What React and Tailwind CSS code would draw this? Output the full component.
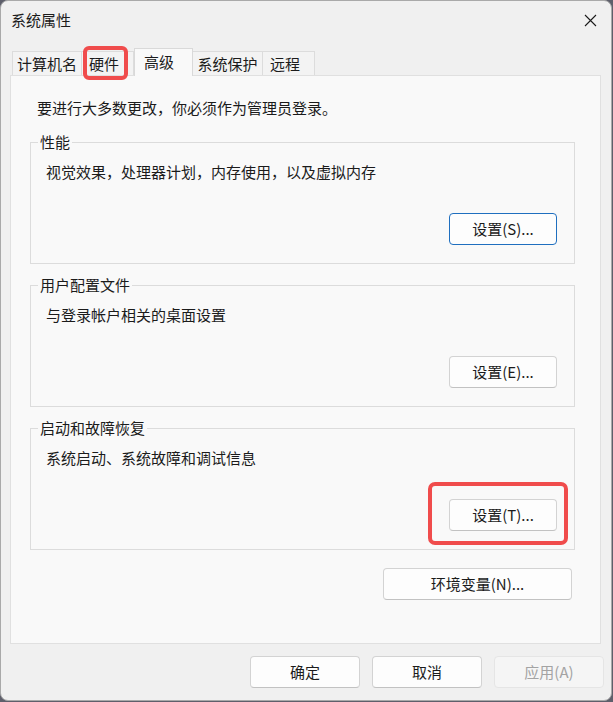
import React from "react";

// Tabs across the top of the property sheet
const TABS = [
  { label: "计算机名", w: "w-[70px]", pad: "justify-center" },
  { label: "硬件", w: "w-[52px]", pad: "pl-[7px]" },
  { label: "高级", w: "w-[59px]", pad: "pl-[9px]", active: true },
  { label: "系统保护", w: "w-[70px]", pad: "justify-center" },
  { label: "远程", w: "w-[52px]", pad: "pl-[7px]" },
];

const GROUPS = [
  { title: "性能", desc: "视觉效果，处理器计划，内存使用，以及虚拟内存", btn: "设置(S)...", focused: true },
  { title: "用户配置文件", desc: "与登录帐户相关的桌面设置", btn: "设置(E)..." },
  { title: "启动和故障恢复", desc: "系统启动、系统故障和调试信息", btn: "设置(T)..." },
];

function Button({ children, className = "", focused, disabled }) {
  return (
    <div
      className={
        "flex h-[32px] items-center justify-center rounded-[4px] border text-[15px] leading-[20px] " +
        (disabled
          ? "border-[#e5e5e5] bg-[#f5f5f5] text-[#a3a3a3] "
          : focused
            ? "border-[#1f6fbf] bg-[#fdfdfd] text-[#1b1b1b] "
            : "border-[#d3d3d3] border-b-[#c2c2c2] bg-[#fdfdfd] text-[#1b1b1b] ") +
        className
      }
    >
      {children}
    </div>
  );
}

function Group({ title, desc, btn, focused }) {
  return (
    <div className="relative h-[122px] w-[545px] border border-[#dcdcdc]">
      {/* legend sitting on the top border */}
      <span className="absolute left-[7px] top-[-11px] bg-[#f9f9f9] px-[2px] text-[15px] leading-[20px] text-[#1b1b1b]">
        {title}
      </span>
      <p className="pl-[15px] pt-[19px] text-[15px] leading-[20px] text-[#1b1b1b]">{desc}</p>
      <div className="mt-[31px] flex justify-end pr-[17px]">
        <Button className="w-[108px]" focused={focused}>
          {btn}
        </Button>
      </div>
    </div>
  );
}

export default function App() {
  return (
    <div className="relative h-[702px] w-[613px] bg-[#5e5f6b] font-['Microsoft_YaHei_UI','Noto_Sans_CJK_SC',sans-serif]">
      <div className="flex h-[701px] w-[612px] flex-col overflow-hidden rounded-[8px] border border-[#a9a9a9] bg-[#f0f0f0]">
        {/* Title bar */}
        <div className="flex h-[37px] shrink-0 items-center justify-between pl-[10px] pr-[14px]">
          <span className="text-[15px] leading-[20px] text-[#1b1b1b]">系统属性</span>
          <svg width="13" height="13" viewBox="0 0 13 13" className="mt-[1px]">
            <path d="M1 1 L12 12 M12 1 L1 12" stroke="#1b1b1b" strokeWidth="1.1" />
          </svg>
        </div>

        {/* Tab strip */}
        <div className="mt-[10px] flex h-[27px] shrink-0 items-end pl-[11px]">
          {TABS.map((t) =>
            t.active ? (
              <div
                key={t.label}
                className={`relative z-10 mb-[-1px] flex h-[28px] items-start border border-b-0 border-[#d9d9d9] bg-[#f9f9f9] pt-[3px] text-[15px] leading-[20px] text-[#1b1b1b] ${t.w} ${t.pad}`}
              >
                {t.label}
              </div>
            ) : (
              <div
                key={t.label}
                className={`flex h-[24px] items-center border border-b-0 border-l-0 border-[#dcdcdc] bg-[#f3f3f3] text-[15px] leading-[20px] text-[#1b1b1b] first:border-l ${t.w} ${t.pad}`}
              >
                {t.label}
              </div>
            )
          )}
        </div>

        {/* Tab page */}
        <div className="ml-[9px] flex h-[569px] w-[591px] shrink-0 flex-col border border-[#e0e0e0] bg-[#f9f9f9]">
          <p className="mt-[22px] pl-[26px] text-[15px] leading-[20px] text-[#1b1b1b]">
            要进行大多数更改，你必须作为管理员登录。
          </p>
          <div className="mt-[24px] flex flex-col gap-[21px] pl-[19px]">
            {GROUPS.map((g) => (
              <Group key={g.title} {...g} />
            ))}
          </div>
          <div className="mt-[18px] flex justify-end pr-[28px]">
            <Button className="w-[189px]">环境变量(N)...</Button>
          </div>
        </div>

        {/* Dialog buttons */}
        <div className="mt-[12px] flex justify-end gap-[12px] pr-[7px]">
          <Button className="w-[110px]">确定</Button>
          <Button className="w-[110px]">取消</Button>
          <Button className="w-[110px]" disabled>
            应用(A)
          </Button>
        </div>
      </div>

      {/* Red annotation boxes */}
      <div className="pointer-events-none absolute left-[83px] top-[46px] h-[34px] w-[45px] rounded-[6px] border-[4px] border-[#f04c4c]" />
      <div className="pointer-events-none absolute left-[428px] top-[482px] h-[63px] w-[140px] rounded-[7px] border-[4px] border-[#f04c4c]" />
    </div>
  );
}
